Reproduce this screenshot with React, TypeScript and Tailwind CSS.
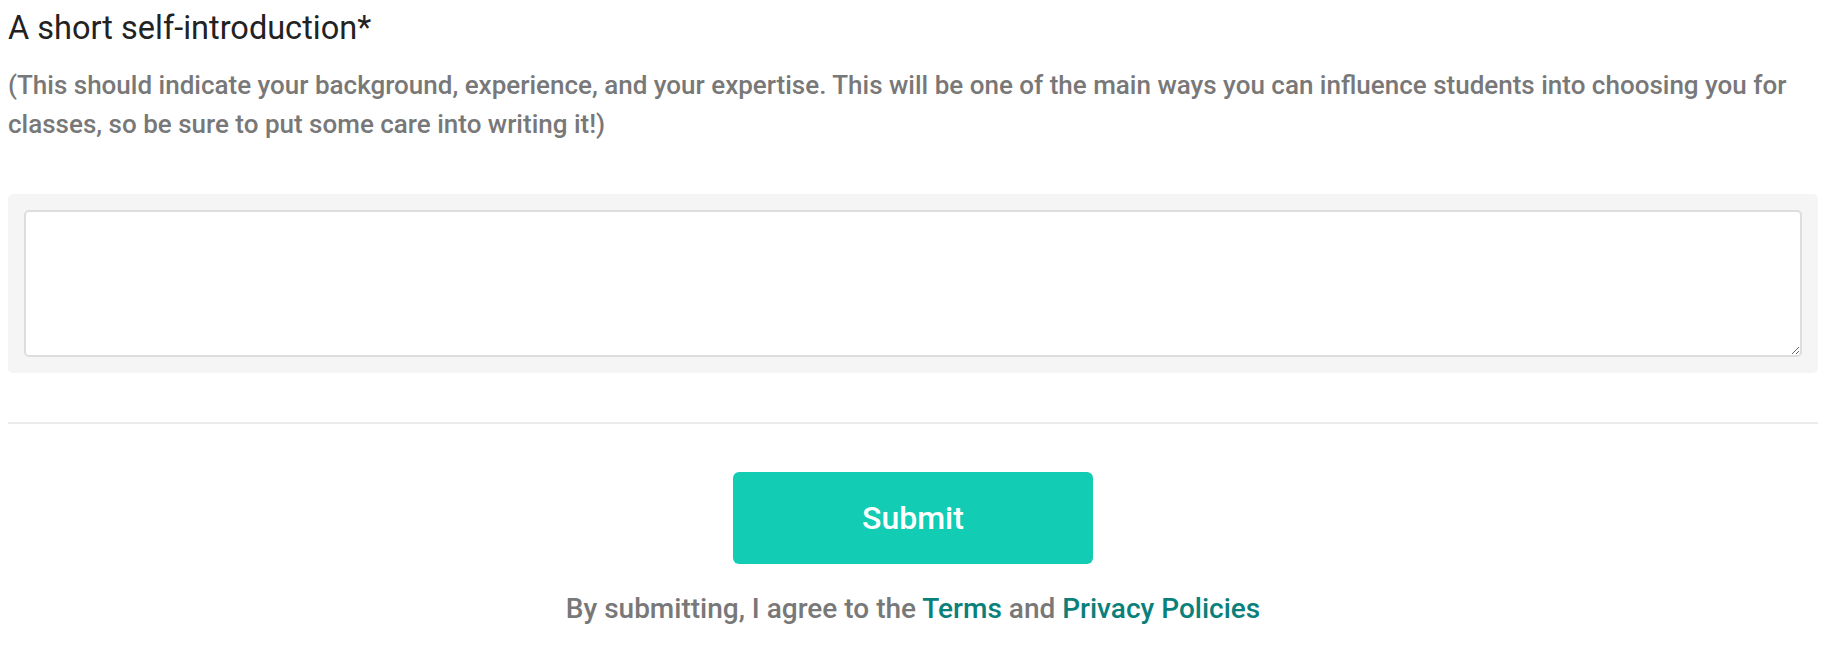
export default function App() {
  return (
    <div className="min-h-screen bg-white px-2 font-['Roboto',sans-serif]">
      {/* Pregunta */}
      <h2 className="pt-2 text-[32.5px] leading-[40px] text-[#222222]">
        A short self-introduction*
      </h2>
      <p className="mt-[18px] text-[26px] leading-[39px] font-medium text-[#787878]">
        (This should indicate your background, experience, and your expertise. This will be one of the main ways you can
        influence students into choosing you for classes, so be sure to put some care into writing it!)
      </p>

      {/* Campo de texto */}
      <div className="mt-[50px] rounded-[5px] bg-[#f5f5f5] p-4">
        <textarea className="block h-[147px] w-full resize-y rounded-[5px] border-2 border-[#dddddd] bg-white p-2 text-[20px] outline-none" />
      </div>

      <hr className="mt-[49px] border-t-2 border-[#ebebeb]" />

      {/* Botón de enviar */}
      <div className="flex flex-col items-center">
        <button className="mt-[48px] h-[92px] w-[360px] rounded-[6px] bg-[#12cdb4] text-[32px] font-medium text-white">
          Submit
        </button>
        <p className="mt-[27px] text-[28px] leading-[36px] font-medium text-[#787878]">
          By submitting, I agree to the <a className="text-[#0a807b]">Terms</a> and{" "}
          <a className="text-[#0a807b]">Privacy Policies</a>
        </p>
      </div>
    </div>
  )
}
